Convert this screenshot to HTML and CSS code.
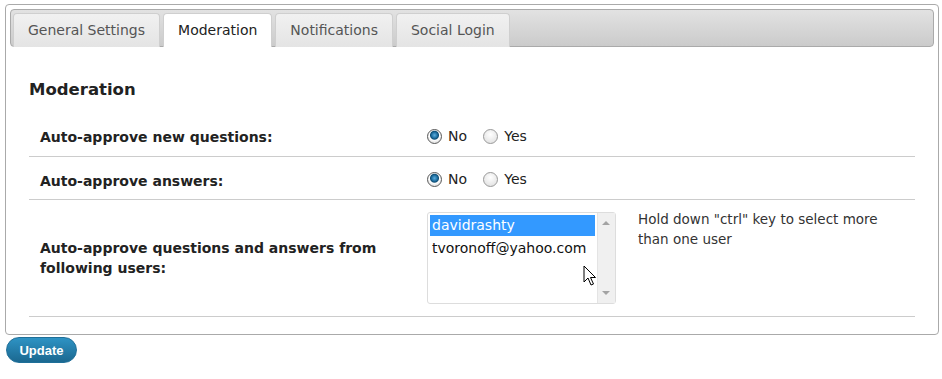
FILE: index.html
```html
<!DOCTYPE html>
<html lang="en">
  <head>
    <meta charset="UTF-8" />
    <title>Moderation Settings</title>
    <link rel="stylesheet" href="styles.css">
  </head>
  <body>
    <div class="settings-box">
      <ul class="tab-bar">
        <li class="tab">General Settings</li>
        <li class="tab active">Moderation</li>
        <li class="tab">Notifications</li>
        <li class="tab">Social Login</li>
      </ul>
      <div class="tab-content">
        <h3 class="section-title">Moderation</h3>
        <table class="form-table">
          <tr>
            <th>Auto-approve new questions:</th>
            <td>
              <label class="radio-label"><input type="radio" name="q_approve" checked /> No</label>
              <label class="radio-label"><input type="radio" name="q_approve" /> Yes</label>
            </td>
          </tr>
          <tr>
            <th>Auto-approve answers:</th>
            <td>
              <label class="radio-label"><input type="radio" name="a_approve" checked /> No</label>
              <label class="radio-label"><input type="radio" name="a_approve" /> Yes</label>
            </td>
          </tr>
          <tr class="users-row">
            <th>Auto-approve questions and answers from following users:</th>
            <td>
              <div class="users-field">
                <div class="listbox">
                  <div class="options">
                    <div class="option selected">davidrashty</div>
                    <div class="option">tvoronoff@yahoo.com</div>
                  </div>
                  <div class="scrollbar">
                    <span class="arrow up"></span>
                    <span class="arrow down"></span>
                  </div>
                  <!-- mouse pointer over the list -->
                  <svg class="pointer" width="14" height="22" viewBox="0 0 14 22">
                    <path d="M1 1 L1 17 L5 13 L8 20 L10.5 19 L7.5 12.5 L12.5 12.5 Z" fill="#fff" stroke="#000" stroke-width="1" stroke-linejoin="miter" />
                  </svg>
                </div>
                <p class="hint">Hold down "ctrl" key to select more than one user</p>
              </div>
            </td>
          </tr>
        </table>
      </div>
    </div>
    <button class="update-button">Update</button>
  </body>
</html>
```

FILE: styles.css
```css
body {
  margin: 0;
  padding: 4px 0 0 5px;
  background: #fff;
  font-family: "DejaVu Sans", Verdana, sans-serif;
  font-size: 13px;
  color: #222;
}
.settings-box {
  width: 934px;
  height: 331px;
  border: 1px solid #aaa;
  border-radius: 4px;
  padding: 4px 4px 0;
  box-sizing: border-box;
}
.tab-bar {
  display: flex;
  gap: 3px;
  height: 38px;
  margin: 0;
  padding: 3px 2px 0;
  list-style: none;
  box-sizing: border-box;
  border: 1px solid #aaa;
  border-radius: 4px;
  background: linear-gradient(#e2e2e2, #cbcbcb);
}
.tab {
  height: 34px;
  line-height: 33px;
  padding: 0 14px;
  box-sizing: border-box;
  border: 1px solid #cfcfcf;
  border-bottom: none;
  border-radius: 4px 4px 0 0;
  background: linear-gradient(#f1f1f1, #e4e4e4);
  color: #555;
  font-size: 14px;
}
.tab.active {
  background: #fff;
  color: #222;
}
.tab-content {
  padding: 0 19px;
}
.section-title {
  margin: 32px 0 13px;
  font-size: 16.5px;
  line-height: 21px;
  font-weight: bold;
}
.form-table {
  width: 100%;
  table-layout: fixed;
  border-collapse: collapse;
}
.form-table th {
  width: 398px;
  box-sizing: border-box;
  padding: 6px 10px 0 11px;
  text-align: left;
  font-weight: bold;
  font-size: 14px;
  line-height: 20px;
}
.form-table td {
  padding: 6px 0 0;
}
.form-table tr {
  height: 43px;
  border-bottom: 1px solid #ccc;
}
.form-table tr.users-row {
  height: 117px;
}
.users-row th {
  padding-top: 0;
}
.users-row td {
  padding-top: 0;
}
.radio-label {
  display: inline-flex;
  align-items: center;
  gap: 6px;
  margin-right: 12px;
  font-size: 14px;
}
.radio-label input {
  appearance: none;
  width: 15px;
  height: 15px;
  margin: 0;
  border: 1px solid #9a9a9a;
  border-radius: 50%;
  background: radial-gradient(circle at 50% 35%, #fff, #dcdcdc);
}
.radio-label input:checked {
  border-color: #5a5a5a;
  background: radial-gradient(circle at 50% 40%, #5eaede 0, #1b6c9e 3px, #0f4d73 4px, #fff 5px, #e8e8e8 7px);
}
.users-field {
  display: flex;
  align-items: flex-start;
  gap: 22px;
  padding: 12px 0;
}
.listbox {
  position: relative;
  display: flex;
  width: 189px;
  height: 92px;
  border: 1px solid #ddd;
  border-radius: 3px;
  box-sizing: border-box;
}
.options {
  flex: 1;
  padding: 2px 2px 0;
}
.option {
  height: 21px;
  line-height: 21px;
  padding: 0 2px;
  font-size: 14px;
  color: #111;
  white-space: nowrap;
}
.option.selected {
  background: #3399ff;
  color: #fff;
  margin-bottom: 2px;
}
.scrollbar {
  position: relative;
  width: 17px;
  background: #f0f0f0;
  border-left: 1px solid #e4e4e4;
}
.arrow {
  position: absolute;
  left: 4px;
  width: 0;
  height: 0;
  border-left: 4px solid transparent;
  border-right: 4px solid transparent;
}
.arrow.up {
  top: 8px;
  border-bottom: 4px solid #a3a3a3;
}
.arrow.down {
  bottom: 8px;
  border-top: 4px solid #a3a3a3;
}
.pointer {
  position: absolute;
  left: 155px;
  top: 52px;
}
.hint {
  width: 250px;
  margin: -3px 0 0;
  font-size: 13.5px;
  line-height: 20px;
  color: #333;
}
.update-button {
  display: block;
  margin: 2px 0 0 1px;
  width: 71px;
  height: 26px;
  padding: 0;
  border: 1px solid #1f6f99;
  border-radius: 13px;
  background: linear-gradient(#2e93c4, #1b6890);
  color: #fff;
  font-family: "Liberation Sans", Arial, sans-serif;
  font-size: 13px;
  font-weight: bold;
  cursor: pointer;
}
```
